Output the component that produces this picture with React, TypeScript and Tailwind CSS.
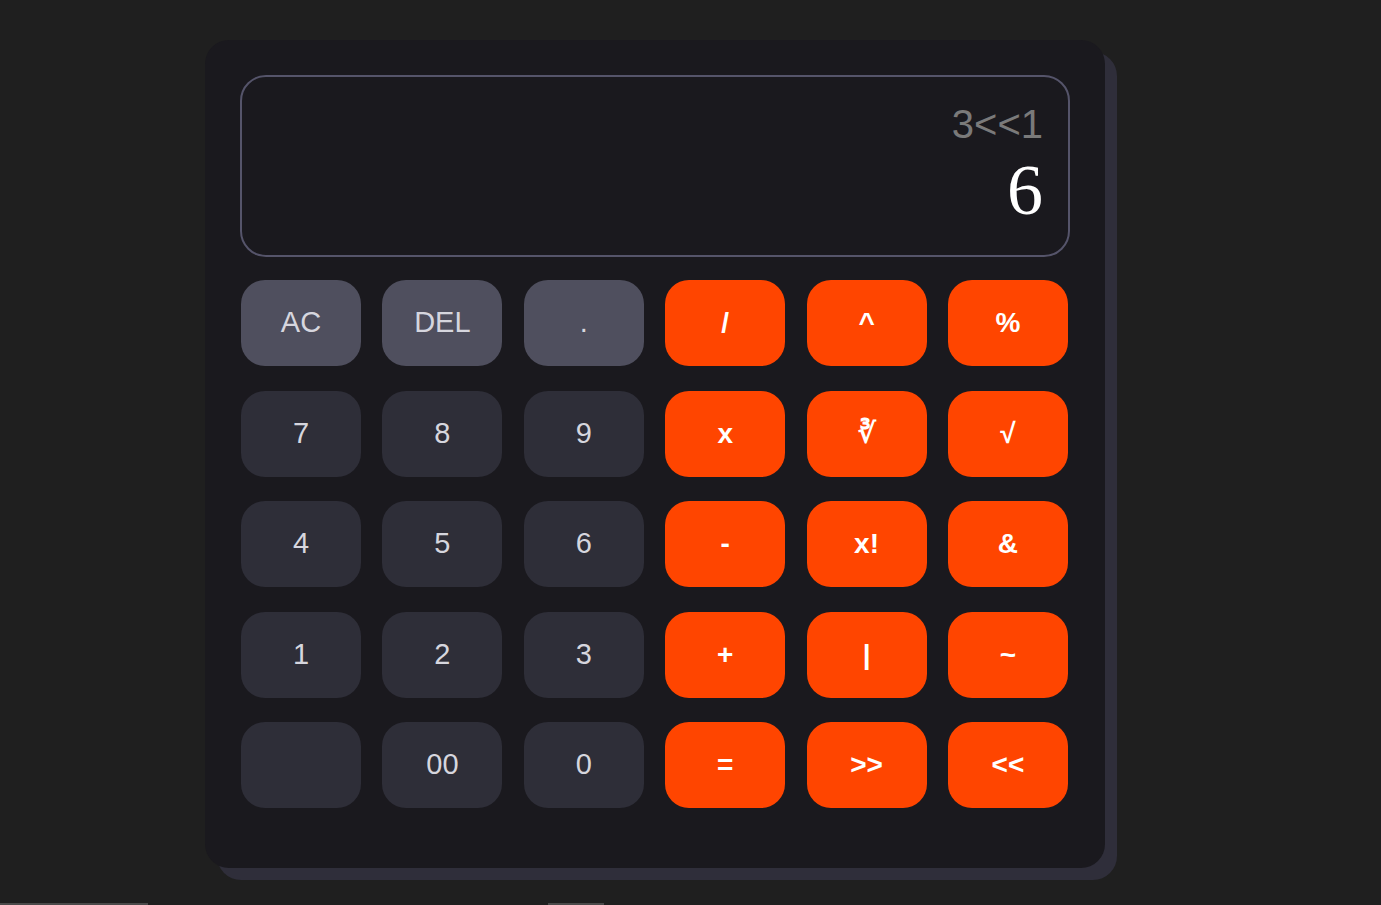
import React from "react";

type Kind = "gray" | "dark" | "orange";
const rows: [string, Kind][][] = [
  [["AC", "gray"], ["DEL", "gray"], [".", "gray"], ["/", "orange"], ["^", "orange"], ["%", "orange"]],
  [["7", "dark"], ["8", "dark"], ["9", "dark"], ["x", "orange"], ["∛", "orange"], ["√", "orange"]],
  [["4", "dark"], ["5", "dark"], ["6", "dark"], ["-", "orange"], ["x!", "orange"], ["&", "orange"]],
  [["1", "dark"], ["2", "dark"], ["3", "dark"], ["+", "orange"], ["|", "orange"], ["~", "orange"]],
  [["", "dark"], ["00", "dark"], ["0", "dark"], ["=", "orange"], [">>", "orange"], ["<<", "orange"]],
];

const kindClass: Record<Kind, string> = {
  gray: "bg-[#4f4f5e] text-[#d6d6de] font-normal text-[29px]",
  dark: "bg-[#2e2e38] text-[#d6d6de] font-normal text-[29px]",
  orange: "bg-[#ff4500] text-white font-bold text-[28px]",
};

export default function App() {
  return (
    <div className="min-h-[905px] w-full bg-[#1f1f1f] overflow-hidden font-['Liberation_Sans',Arial,sans-serif]">
      <div className="pt-[40px] pl-[205px]">
        <div className="w-[900px] h-[828px] rounded-[24px] bg-[#1a191e] shadow-[12px_12px_0_0_#2f2e3a] px-[35px] pt-[35px]">
          <div className="h-[182px] w-[830px] rounded-[26px] border-2 border-[#55546a] flex flex-col items-end pt-[24px] pr-[25px]">
            <div className="text-[40px] leading-[46px] text-[#7a7a7a]">3&lt;&lt;1</div>
            <div className="mt-[2px] text-[72px] leading-[83px] text-white font-['Liberation_Serif','Times_New_Roman',serif]">6</div>
          </div>
          <div className="mt-[23px] ml-px w-[827px] grid grid-cols-[repeat(6,120px)] gap-x-[21.4px] gap-y-[24.5px]">
            {rows.flat().map(([label, kind], i) => (
              <div
                key={i}
                className={`h-[86px] rounded-[24px] flex items-center justify-center ${kindClass[kind]}`}
              >
                {label}
              </div>
            ))}
          </div>
        </div>
      </div>
      <div className="mt-[35px] flex">
        <div className="w-[148px] h-[20px] bg-[#4a4a4a]" />
        <div className="ml-[400px] w-[56px] h-[20px] bg-[#4a4a4a]" />
      </div>
    </div>
  );
}
